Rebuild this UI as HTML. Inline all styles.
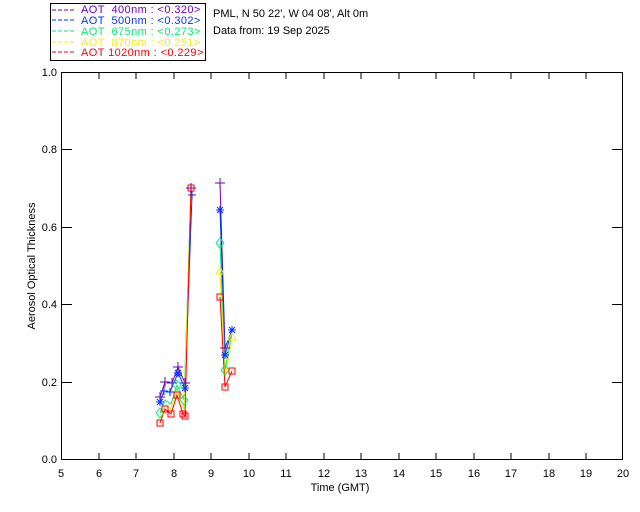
<!DOCTYPE html>
<html><head><style>
body{margin:0;background:#fff;width:640px;height:512px;overflow:hidden}
svg{display:block}
text{font-family:"Liberation Sans",sans-serif;font-size:11px}
</style></head><body>
<svg width="640" height="512" viewBox="0 0 640 512" xmlns="http://www.w3.org/2000/svg">
<rect x="50.5" y="3.5" width="155" height="57" fill="none" stroke="#000"/>
<g font-size="11" letter-spacing="0.4">
<line x1="52" y1="10" x2="74" y2="10" stroke="#6a00c0" stroke-dasharray="4,2"/><text x="81" y="13" fill="#6a00c0" xml:space="preserve">AOT  400nm : &lt;0.320&gt;</text>
<line x1="52" y1="20" x2="74" y2="20" stroke="#0033ff" stroke-dasharray="4,2"/><text x="81" y="24" fill="#0033ff" xml:space="preserve">AOT  500nm : &lt;0.302&gt;</text>
<line x1="52" y1="31" x2="74" y2="31" stroke="#00ee77" stroke-dasharray="4,2"/><text x="81" y="35" fill="#00ee77" xml:space="preserve">AOT  675nm : &lt;0.273&gt;</text>
<line x1="52" y1="42" x2="74" y2="42" stroke="#ffee00" stroke-dasharray="4,2"/><text x="81" y="46" fill="#ffee00" xml:space="preserve">AOT  870nm : &lt;0.251&gt;</text>
<line x1="52" y1="52" x2="74" y2="52" stroke="#ff0000" stroke-dasharray="4,2"/><text x="81" y="56" fill="#ff0000" xml:space="preserve">AOT 1020nm : &lt;0.229&gt;</text>
</g>
<text x="213" y="17" font-size="10.5">PML, N 50 22', W 04 08', Alt 0m</text>
<text x="213" y="34" font-size="10.5">Data from: 19 Sep 2025</text>
<rect x="61.5" y="72.5" width="561" height="387" fill="none" stroke="#000"/>
<g stroke="#000">
<path d="M99 460v-7M136 460v-7M174 460v-7M211 460v-7M249 460v-7M286 460v-7M324 460v-7M361 460v-7M399 460v-7M436 460v-7M474 460v-7M511 460v-7M549 460v-7M586 460v-7"/>
<path d="M99 72v7M136 72v7M174 72v7M211 72v7M249 72v7M286 72v7M324 72v7M361 72v7M399 72v7M436 72v7M474 72v7M511 72v7M549 72v7M586 72v7"/>
<path d="M61 382.5h11M61 304.5h11M61 227.5h11M61 149.5h11M623 382.5h-11M623 304.5h-11M623 227.5h-11M623 149.5h-11"/>
</g>
<g text-anchor="end" font-size="10">
<text x="57" y="463">0.0</text><text x="57" y="386">0.2</text><text x="57" y="308">0.4</text><text x="57" y="231">0.6</text><text x="57" y="153">0.8</text><text x="57" y="76">1.0</text>
</g>
<g text-anchor="middle" font-size="10">
<text x="61" y="477">5</text><text x="99" y="477">6</text><text x="136" y="477">7</text><text x="174" y="477">8</text><text x="211" y="477">9</text><text x="249" y="477">10</text><text x="286" y="477">11</text><text x="324" y="477">12</text><text x="361" y="477">13</text><text x="399" y="477">14</text><text x="436" y="477">15</text><text x="474" y="477">16</text><text x="511" y="477">17</text><text x="549" y="477">18</text><text x="586" y="477">19</text><text x="623" y="477">20</text>
<text x="340" y="491">Time (GMT)</text>
<text transform="translate(35,266) rotate(-90)" font-size="9.5">Aerosol Optical Thickness</text>
</g>
<g fill="none" stroke-width="1">
<polyline stroke="#6a00c0" points="160,397 165,382 172,383 178,367 185,383 191,188"/>
<polyline stroke="#6a00c0" points="220,183 225,348 232,330"/>
<polyline stroke="#0033ff" points="160,402 164,391 170,392 178,373 185,388 192,195"/>
<polyline stroke="#0033ff" points="220,210 225,355 232,330"/>
<polyline stroke="#00ee77" points="160,413 165,400 171,404 177,385 184,400 191,192"/>
<polyline stroke="#00ee77" points="220,243 225,370 232,333"/>
<polyline stroke="#ffee00" points="160,418 165,405 171,409 177,390 184,409 191,190"/>
<polyline stroke="#ffee00" points="220,272 225,378 232,338"/>
<polyline stroke="#ff0000" points="160,423 165,409 171,414 177,395 183,414 185,416 191,188"/>
<polyline stroke="#ff0000" points="220,297 225,387 232,371"/>
</g>
<g stroke="#6a00c0" stroke-width="1">
<path d="M160 392v10M155 397h10M165 377v10M160 382h10M172 378v10M167 383h10M178 362v10M173 367h10M185 378v10M180 383h10M191 183v10M186 188h10M220 178v10M215 183h10M225 343v10M220 348h10"/>
</g>
<g stroke="#0033ff" stroke-width="1">
<path d="M156 402h8M160 398v8M157 399l6 6M163 399l-6 6M160 391h8M164 387v8M174 392h-8M170 388v8M174 373h8M178 369v8M175 370l6 6M181 370l-6 6M181 388h8M185 384v8M182 385l6 6M188 385l-6 6M188 195h8M192 191v8M216 210h8M220 206v8M217 207l6 6M223 207l-6 6M221 355h8M225 351v8M222 352l6 6M228 352l-6 6M228 330h8M232 326v8M229 327l6 6M235 327l-6 6"/>
</g>
<g stroke="#00ee77" fill="none"><path d="M220 238l4 5-4 5-4-5zM225 365l4 5-4 5-4-5zM160 408l4 5-4 5-4-5zM177 380l4 5-4 5-4-5zM184 395l4 5-4 5-4-5z"/></g>
<g stroke="#ffee00" fill="none"><path d="M220 267l4 7h-8zM232 333l4 7h-8z"/></g>
<g stroke="#ff0000" fill="none" stroke-width="1">
<rect x="157" y="420" width="6" height="6"/><rect x="162" y="406" width="6" height="6"/><rect x="168" y="411" width="6" height="6"/><rect x="174" y="392" width="6" height="6"/><rect x="180" y="411" width="6" height="6"/><rect x="182" y="413" width="6" height="6"/><rect x="188" y="185" width="6" height="6"/><rect x="217" y="294" width="6" height="6"/><rect x="222" y="384" width="6" height="6"/><rect x="229" y="368" width="6" height="6"/>
</g>
</svg>
</body></html>
